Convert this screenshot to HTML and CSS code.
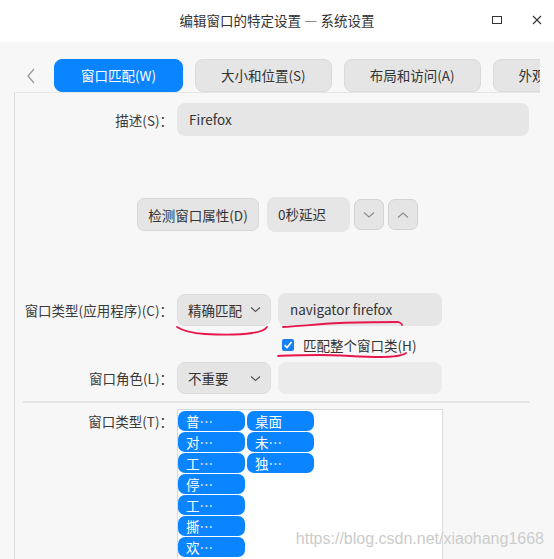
FILE: index.html
```html
<!DOCTYPE html>
<html lang="zh-CN">
<head>
<meta charset="utf-8">
<title>编辑窗口的特定设置 — 系统设置</title>
<link rel="stylesheet" href="styles.css">
</head>
<body>
<div class="window">
  <header class="titlebar">
    <div class="spacer"></div>
    <div class="title">编辑窗口的特定设置 — 系统设置</div>
    <div class="wm-buttons">
      <svg class="wm-icon" width="10" height="10" viewBox="0 0 10 10"><rect x="0.5" y="1.5" width="9" height="7" fill="none" stroke="#333" stroke-width="1"/></svg>
      <svg class="wm-icon" width="10" height="10" viewBox="0 0 10 10"><path d="M1 1 L9 9 M9 1 L1 9" fill="none" stroke="#333" stroke-width="1.1"/></svg>
    </div>
  </header>

  <nav class="tabbar">
    <svg class="back" width="10" height="16" viewBox="0 0 10 16"><path d="M8 1 L2 8 L8 15" fill="none" stroke="#9a9a9a" stroke-width="1.3"/></svg>
    <div class="tabs">
      <div class="tab active">窗口匹配(W)</div>
      <div class="tab">大小和位置(S)</div>
      <div class="tab">布局和访问(A)</div>
      <div class="tab">外观和修正(P)</div>
    </div>
  </nav>

  <main class="panel">
    <div class="row row-desc">
      <div class="label">描述(S)：</div>
      <div class="input desc">Firefox</div>
    </div>

    <div class="detect-row">
      <div class="btn detect">检测窗口属性(D)</div>
      <div class="delay">0秒延迟</div>
      <div class="btn arrow-btn"><svg width="12" height="8" viewBox="0 0 12 8"><path d="M1 1.5 L6 6 L11 1.5" fill="none" stroke="#8a8a8a" stroke-width="1.1"/></svg></div>
      <div class="btn arrow-btn"><svg width="12" height="8" viewBox="0 0 12 8"><path d="M1 6.5 L6 2 L11 6.5" fill="none" stroke="#8a8a8a" stroke-width="1.1"/></svg></div>
    </div>

    <div class="row row-class">
      <div class="label">窗口类型(应用程序)(C)：</div>
      <div class="select">精确匹配<svg class="chev" width="11" height="7" viewBox="0 0 11 7"><path d="M1 1.5 L5.5 5.5 L10 1.5" fill="none" stroke="#555" stroke-width="1.1"/></svg></div>
      <div class="input value">navigator firefox</div>
    </div>

    <div class="row row-check">
      <div class="label"></div>
      <div class="check-wrap">
        <svg class="checkbox" width="12" height="12" viewBox="0 0 12 12"><rect x="0" y="0" width="12" height="12" rx="2" fill="#1a7ff0"/><path d="M2.6 6.2 L5 8.6 L9.6 3" fill="none" stroke="#fff" stroke-width="1.7"/></svg>
        <span class="check-label">匹配整个窗口类(H)</span>
      </div>
    </div>

    <div class="row row-role">
      <div class="label">窗口角色(L)：</div>
      <div class="select">不重要<svg class="chev" width="11" height="7" viewBox="0 0 11 7"><path d="M1 1.5 L5.5 5.5 L10 1.5" fill="none" stroke="#555" stroke-width="1.1"/></svg></div>
      <div class="input value empty"></div>
    </div>

    <div class="separator"></div>

    <div class="row row-types">
      <div class="label">窗口类型(T)：</div>
      <div class="listbox">
        <div class="chip-col">
          <div class="chip">普…</div>
          <div class="chip">对…</div>
          <div class="chip">工…</div>
          <div class="chip">停…</div>
          <div class="chip">工…</div>
          <div class="chip">撕…</div>
          <div class="chip">欢…</div>
        </div>
        <div class="chip-col">
          <div class="chip">桌面</div>
          <div class="chip">未…</div>
          <div class="chip">独…</div>
        </div>
      </div>
    </div>
  </main>

  <svg class="annotations" width="554" height="559" viewBox="0 0 554 559">
    <path d="M177 327 C183 331 190 333 205 334 C222 335 240 335 252 333 C260 332 265 330 267 327" fill="none" stroke="#e8164c" stroke-width="1.8" stroke-linecap="round"/>
    <path d="M283 327 C300 326 320 324 340 323 C360 322 385 322 398 322 C401 323 402 324 402 325" fill="none" stroke="#e8164c" stroke-width="1.8" stroke-linecap="round"/>
    <path d="M278 356 C290 355 305 355 320 355 C340 355 360 357 380 357 C395 357 402 356 406 353" fill="none" stroke="#e8164c" stroke-width="1.8" stroke-linecap="round"/>
  </svg>
  <div class="watermark">https://blog.csdn.net/xiaohang1668</div>
</div>
</body>
</html>
```

FILE: styles.css
```css
* { box-sizing: border-box; }

html, body {
  margin: 0;
  padding: 0;
}

body {
  width: 554px;
  height: 559px;
  overflow: hidden;
  background: #f7f7f7;
  font-family: "Noto Sans CJK SC", "Noto Sans", sans-serif;
  font-size: 13.5px;
  color: #383838;
}

.window {
  position: relative;
  width: 554px;
  height: 559px;
  overflow: hidden;
}

/* title bar */
.titlebar {
  height: 42px;
  background: #ffffff;
  display: grid;
  grid-template-columns: 1fr auto 1fr;
  align-items: center;
}

.title {
  color: #333;
  font-size: 13.5px;
  line-height: 20px;
  padding-bottom: 2px;
}

.wm-buttons {
  justify-self: end;
  display: flex;
  align-items: center;
  gap: 30px;
  padding-right: 12px;
  padding-bottom: 2px;
}

.wm-icon { display: block; }

/* tab bar */
.tabbar {
  height: 50px;
  padding-top: 17px;
  display: flex;
  align-items: flex-start;
}

.back {
  display: block;
  margin-left: 26px;
  margin-top: 9px;
  flex: none;
}

.tabs {
  margin-left: 18px;
  width: 486px;
  overflow: hidden;
  display: flex;
  gap: 12px;
}

.tab {
  flex: none;
  height: 33px;
  line-height: 31px;
  padding: 0 26px;
  border: 1px solid #dadada;
  border-radius: 8px;
  background: #e5e5e5;
  color: #333;
  white-space: nowrap;
}

.tab + .tab {
  padding: 0 25px;
}

.tab.active {
  background: #0a84ff;
  border-color: #0a84ff;
  color: #fff;
}

/* panel */
.panel {
  margin-left: 14px;
  width: 526px;
  height: 467px;
  border-left: 1px solid #dcdcdc;
  border-top: 1px solid #e6e6e6;
  padding-top: 10px;
}

.row {
  display: flex;
  align-items: center;
}

.label {
  flex: none;
  width: 158px;
  margin-right: 4px;
  text-align: right;
  white-space: nowrap;
  color: #3a3a3a;
}

.input {
  height: 33px;
  line-height: 33px;
  border-radius: 8px;
  background: #e6e6e6;
  padding-left: 12px;
  color: #333;
}

.input.desc {
  width: 352px;
}

.detect-row {
  margin-top: 61px;
  display: flex;
  justify-content: center;
  align-items: center;
  gap: 4px;
}

.btn {
  height: 33px;
  border: 1px solid #d9d9d9;
  border-radius: 7px;
  background: #e5e5e5;
  display: flex;
  align-items: center;
  justify-content: center;
  color: #333;
}

.btn.detect {
  width: 122px;
  margin-right: 4px;
}

.delay {
  width: 83px;
  height: 35px;
  line-height: 35px;
  padding-left: 11px;
  border-radius: 8px;
  background: #e6e6e6;
  color: #333;
}

.arrow-btn {
  width: 30px;
  height: 31px;
  border-color: #d2d2d2;
}

.arrow-btn svg { display: block; }

.row-class {
  margin-top: 61px;
}

.select {
  flex: none;
  width: 94px;
  height: 32px;
  border: 1px solid #dcdcdc;
  border-radius: 8px;
  background: #e5e5e5;
  display: flex;
  align-items: center;
  justify-content: space-between;
  padding: 0 9px 0 10px;
  color: #333;
  margin-right: 7px;
}

.chev { display: block; }

.input.value {
  width: 164px;
  padding-left: 12px;
}

.input.empty {
  background: #ebebeb;
  height: 32px;
}

.row-check {
  margin-top: 9px;
  height: 20px;
}

.check-wrap {
  margin-left: 105px;
  display: flex;
  align-items: center;
  gap: 9px;
}

.checkbox { display: block; }

.check-label {
  color: #333;
  line-height: 20px;
}

.row-role {
  margin-top: 7px;
}

.separator {
  margin: 7px 10px 0 8px;
  height: 2px;
  background: #e4e4e4;
}

.row-types {
  margin-top: 6px;
  align-items: flex-start;
}

.row-types .label {
  line-height: 22px;
  padding-top: 1px;
}

.listbox {
  width: 266px;
  height: 200px;
  background: #fff;
  border: 1px solid #dadada;
  padding-top: 1px;
  display: flex;
  gap: 2px;
}

.chip-col {
  display: flex;
  flex-direction: column;
  gap: 1px;
}

.chip {
  width: 67px;
  height: 20px;
  line-height: 20px;
  border-radius: 7px;
  background: #0a84ff;
  color: #fff;
  padding-left: 8px;
  white-space: nowrap;
}

/* overlays */
.annotations {
  position: absolute;
  left: 0;
  top: 0;
  pointer-events: none;
}

.watermark {
  position: absolute;
  right: 10px;
  top: 530px;
  font-family: "Liberation Sans", Arial, sans-serif;
  font-size: 16px;
  line-height: 18px;
  color: #cbcbcb;
  text-shadow: 0 0 1px rgba(255,255,255,0.9);
  pointer-events: none;
}
```
